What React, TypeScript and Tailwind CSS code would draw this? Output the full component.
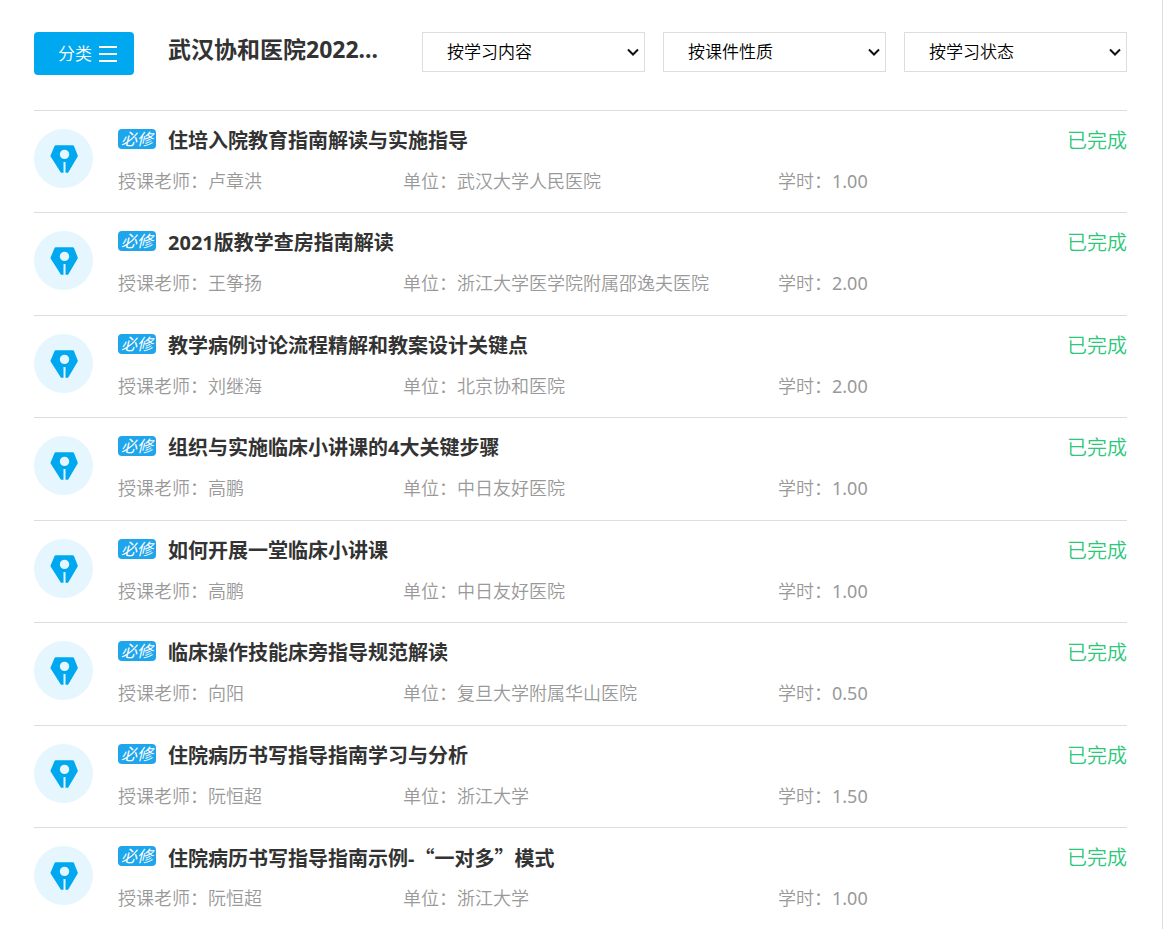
import React, { useState } from 'react'

interface Course {
  id: number
  title: React.ReactNode
  teacher: string
  unit: string
  hours: string
}

// 弯引号使用中文字体的全角字形
const Quote: React.FC<{ children: React.ReactNode }> = ({ children }) => (
  <span className="font-['Noto_Sans_CJK_SC',sans-serif]">{children}</span>
)

const courses: Course[] = [
  { id: 1, title: '住培入院教育指南解读与实施指导', teacher: '卢章洪', unit: '武汉大学人民医院', hours: '1.00' },
  { id: 2, title: '2021版教学查房指南解读', teacher: '王筝扬', unit: '浙江大学医学院附属邵逸夫医院', hours: '2.00' },
  { id: 3, title: '教学病例讨论流程精解和教案设计关键点', teacher: '刘继海', unit: '北京协和医院', hours: '2.00' },
  { id: 4, title: '组织与实施临床小讲课的4大关键步骤', teacher: '高鹏', unit: '中日友好医院', hours: '1.00' },
  { id: 5, title: '如何开展一堂临床小讲课', teacher: '高鹏', unit: '中日友好医院', hours: '1.00' },
  { id: 6, title: '临床操作技能床旁指导规范解读', teacher: '向阳', unit: '复旦大学附属华山医院', hours: '0.50' },
  { id: 7, title: '住院病历书写指导指南学习与分析', teacher: '阮恒超', unit: '浙江大学', hours: '1.50' },
  {
    id: 8,
    title: <>住院病历书写指导指南示例-<Quote>“一对多”</Quote>模式</>,
    teacher: '阮恒超',
    unit: '浙江大学',
    hours: '1.00'
  }
]

const filters = ['按学习内容', '按课件性质', '按学习状态']

const PenIcon: React.FC = () => (
  <svg viewBox="0 0 58 58" className="size-[59px] shrink-0" aria-hidden="true">
    <circle cx="29" cy="29" r="29" fill="#e5f6fe" />
    <path
      d="M21.500 16h16.500q1 0 1.400.9l3.600 9.100q.2.600-.2 1.200L33.500 43h-2.500V32.500h-2V43h-2.500L16.500 27.200q-.4-.6-.2-1.200l3.800-9.100q.4-.9 1.400-.9z"
      fill="#00a8f0"
    />
    <circle cx="30" cy="25" r="4.600" fill="#e5f6fe" />
  </svg>
)

const FilterSelect: React.FC<{ name: string }> = ({ name }) => (
  <div className="relative min-w-0 flex-1">
    <select
      aria-label={name}
      className="block h-10 w-full appearance-none border border-[#ddd] bg-white pr-8 pb-px pl-6 text-[17px] text-black"
    >
      <option>{name}</option>
    </select>
    <svg
      viewBox="0 0 12 8"
      className="pointer-events-none absolute top-4 right-[6px] h-2 w-3"
      fill="none"
      aria-hidden="true"
    >
      <path d="M1 1.500l5 5 5-5" stroke="#111" strokeWidth="2" />
    </svg>
  </div>
)

const CourseRow: React.FC<{ course: Course }> = ({ course }) => (
  <li className="flex gap-[25px] border-t border-[#ddd] pt-[18px] pb-[19px] even:pb-5">
    <PenIcon />
    <div className="min-w-0 flex-1">
      <div className="flex h-6 items-start">
        <span className="mr-3 h-5 w-[38px] shrink-0 rounded-sm bg-[#1ea5ec] text-center text-base leading-5 font-normal text-white italic">
          必修
        </span>
        <h2 className="min-w-0 flex-1 text-xl leading-6 font-bold text-[#333]">{course.title}</h2>
        <span className="text-xl leading-6 text-[#2dc77b]">已完成</span>
      </div>
      <div className="mt-4 grid grid-cols-[285px_375px_1fr] text-lg leading-6 text-[#999]">
        <span>授课老师：{course.teacher}</span>
        <span>单位：{course.unit}</span>
        <span>
          学时：<span className="font-normal">{course.hours}</span>
        </span>
      </div>
    </div>
  </li>
)

const App: React.FC = () => {
  const [menuOpen, setMenuOpen] = useState(false)

  return (
    <main
      lang="zh-CN"
      className="mr-px min-h-screen border-r border-[#ddd] bg-white pr-[35px] pl-[34px] pt-8 font-['Noto_Sans','Noto_Sans_CJK_SC',sans-serif] font-[350]"
    >
      <header className="flex items-start pb-[35px]">
        <button
          type="button"
          aria-expanded={menuOpen}
          onClick={() => setMenuOpen(!menuOpen)}
          className="flex h-[43px] w-[100px] shrink-0 items-center gap-[7px] rounded bg-[#00a8f0] pl-6 text-[17px] text-white"
        >
          分类
          <svg viewBox="0 0 18 16" className="h-4 w-[18px]" aria-hidden="true">
            <path d="M0 1h18M0 8h18M0 15h18" stroke="currentColor" strokeWidth="2" />
          </svg>
        </button>
        <h1 className="ml-[34px] w-[254px] shrink-0 text-[23px] leading-[34px] font-bold text-[#333]">
          武汉协和医院2022...
        </h1>
        <div className="flex flex-1 gap-[18px]">
          {filters.map((name) => (
            <FilterSelect key={name} name={name} />
          ))}
        </div>
      </header>

      <ul>
        {courses.map((course) => (
          <CourseRow key={course.id} course={course} />
        ))}
      </ul>
    </main>
  )
}

export default App
